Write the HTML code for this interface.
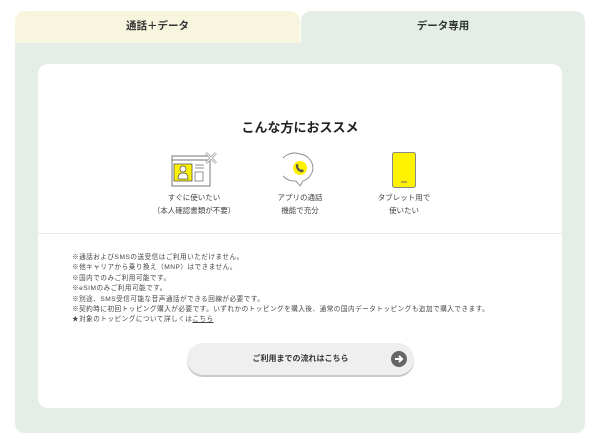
<!DOCTYPE html>
<html><head><meta charset="utf-8"><style>
*{margin:0;padding:0;box-sizing:border-box}
body{width:600px;height:440px;background:#fff;font-family:"Liberation Sans","Noto Sans CJK JP",sans-serif;color:#333;position:relative;overflow:hidden}
.tab{position:absolute;top:11px;height:32px;font-size:10.5px;font-weight:bold;text-align:center;line-height:31px;border-radius:10px 10px 0 0}
.t1{left:15px;width:285px;background:#f7f5de}
.t2{left:301px;width:284px;background:#e4eee7}
.panel{position:absolute;left:15px;top:42px;width:570px;height:391px;background:#e4eee7;border-radius:0 0 10px 10px}
.card{position:absolute;left:38px;top:64px;width:524px;height:344px;background:#fff;border-radius:10px}
.title{position:absolute;top:117px;left:0;width:600px;text-align:center;font-size:13px;font-weight:bold;color:#222}
.lbl{position:absolute;font-size:7.5px;line-height:13px;text-align:center;color:#444;width:120px}
.hr{position:absolute;left:38px;width:524px;top:233px;height:1px;background:#e8e8e8}
.notes{position:absolute;left:72px;top:253px;font-size:6.6px;letter-spacing:0.5px;line-height:10.4px;color:#444;white-space:nowrap}
.btn{position:absolute;left:187px;top:343px;width:227px;height:32px;border-radius:16px;background:#efefef;box-shadow:0 2px 0 #c8c8c8;font-size:8px;font-weight:bold;text-align:center;line-height:31px;color:#333}
.arr{position:absolute;right:7px;top:8px;width:16px;height:16px;border-radius:50%;background:#666}
</style></head><body>
<div class="panel"></div>
<div class="tab t1">通話＋データ</div>
<div class="tab t2">データ専用</div>
<div class="card"></div>
<div class="title">こんな方におススメ</div>
<svg style="position:absolute;left:170px;top:150px" width="52" height="38" viewBox="0 0 52 38">
<rect x="2" y="6" width="38" height="30" fill="#fff" stroke="#777" stroke-width="1"/>
<line x1="2" y1="10" x2="40" y2="10" stroke="#777" stroke-width="1"/>
<rect x="4" y="14" width="18" height="17" fill="#fff200" stroke="#555" stroke-width="0.8"/>
<circle cx="13" cy="19" r="3" fill="#fff" stroke="#555" stroke-width="0.8"/>
<path d="M8 29 Q8 23 13 23 Q18 23 18 29 Z" fill="#fff" stroke="#555" stroke-width="0.8"/>
<line x1="25" y1="15" x2="34" y2="15" stroke="#777" stroke-width=".8"/>
<line x1="25" y1="18" x2="34" y2="18" stroke="#777" stroke-width=".8"/>
<rect x="25" y="22" width="8" height="9" fill="none" stroke="#777" stroke-width=".8"/>
<path d="M36 3 L46 13 M46 3 L36 13" stroke="#999" stroke-width="2.5"/>
<path d="M36 3 L46 13 M46 3 L36 13" stroke="#fff" stroke-width="1"/>
</svg>
<svg style="position:absolute;left:283px;top:152px" width="36" height="36" viewBox="0 0 36 36">
<path d="M17 2 A15 14 0 1 0 13 29 L17 34 L20 29 A15 14 0 0 0 17 2 Z" fill="#fff" stroke="#888" stroke-width="0.9"/>
<circle cx="17" cy="16" r="7" fill="#fff200"/>
<path d="M13 12 Q12 17 17 20 Q19 21 21 19 L19 17 L18 18 Q15 16 15 14 L16 13 Z" fill="#555"/>
</svg>
<svg style="position:absolute;left:391px;top:151px" width="26" height="38" viewBox="0 0 26 38">
<rect x="1.5" y="1.5" width="23" height="35" rx="2" fill="#fff200" stroke="#888" stroke-width="1"/>
<line x1="10" y1="31" x2="16" y2="31" stroke="#666" stroke-width="1"/>
</svg>
<div class="lbl" style="left:134px;top:191px">すぐに使いたい<br>（本人確認書類が不要）</div>
<div class="lbl" style="left:240px;top:191px">アプリの通話<br>機能で充分</div>
<div class="lbl" style="left:344px;top:191px">タブレット用で<br>使いたい</div>
<div class="hr"></div>
<div class="notes">※通話およびSMSの送受信はご利用いただけません。<br>※他キャリアから乗り換え（MNP）はできません。<br>※国内でのみご利用可能です。<br>※eSIMのみご利用可能です。<br>※別途、SMS受信可能な音声通話ができる回線が必要です。<br>※契約時に初回トッピング購入が必要です。いずれかのトッピングを購入後、通常の国内データトッピングも追加で購入できます。<br>★対象のトッピングについて詳しくは<u>こちら</u></div>
<div class="btn">ご利用までの流れはこちら<div class="arr"><svg width="16" height="16" viewBox="0 0 16 16" style="position:absolute;left:0;top:0"><path d="M4 8 H11 M8 5 L11 8 L8 11" stroke="#fff" stroke-width="2" fill="none"/></svg></div></div>
</body></html>
